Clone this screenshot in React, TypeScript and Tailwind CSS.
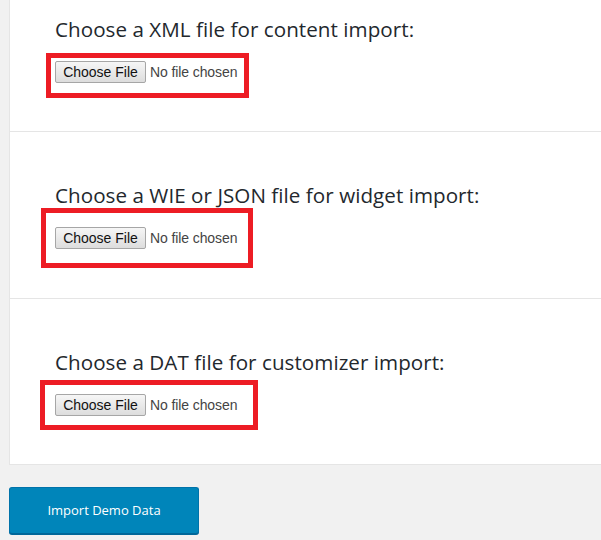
const sections = [
  {
    title: 'Choose a XML file for content import:',
    wrap: 'pt-[14px] pb-[48px] border-b border-[#e5e5e5]',
    box: 'left-[-9px] top-[-8px] w-[203px] h-[45px]',
  },
  {
    title: 'Choose a WIE or JSON file for widget import:',
    wrap: 'pt-[48px] pb-[49px] border-b border-[#e5e5e5]',
    box: 'left-[-14px] top-[-19px] w-[212px] h-[60px]',
  },
  {
    title: 'Choose a DAT file for customizer import:',
    wrap: 'pt-[48px] pb-[48px]',
    box: 'left-[-15px] top-[-14px] w-[218px] h-[50px]',
  },
];

function FilePicker({ box }: { box: string }) {
  return (
    <div className="relative flex items-center gap-[4px] font-['Liberation_Sans',Arial,sans-serif] text-[14px]">
      <button className="h-[22px] w-[91px] rounded-[2px] border border-[#a6a6a6] bg-gradient-to-b from-[#f6f6f6] to-[#dddddd] text-[#111] leading-none">
        Choose File
      </button>
      <span className="text-[#444] tracking-[-0.1px]">No file chosen</span>
      {/* red annotation box */}
      <div className={`absolute border-[5px] border-[#ed1c24] pointer-events-none ${box}`} />
    </div>
  );
}

export default function App() {
  return (
    <div className="min-h-[540px] bg-[#f1f1f1] font-['Open_Sans',sans-serif]">
      <div className="ml-[9px] bg-white border-l border-b border-[#e5e5e5]">
        {sections.map((s) => (
          <div key={s.title} className={`pl-[45px] ${s.wrap}`}>
            <h2 className="text-[20.6px] leading-[28px] font-medium text-[#23282d] tracking-[0.05px] translate-y-[1px]">
              {s.title}
            </h2>
            <div className="mt-[19px]">
              <FilePicker box={s.box} />
            </div>
          </div>
        ))}
      </div>
      <div className="pt-[22px] pl-[9px]">
        <button className="w-[190px] h-[47px] rounded-[3px] bg-[#0085ba] border border-[#0073aa] border-b-[#006799] shadow-[0_1px_0_#006799] text-white text-[13px]">
          Import Demo Data
        </button>
      </div>
    </div>
  );
}
